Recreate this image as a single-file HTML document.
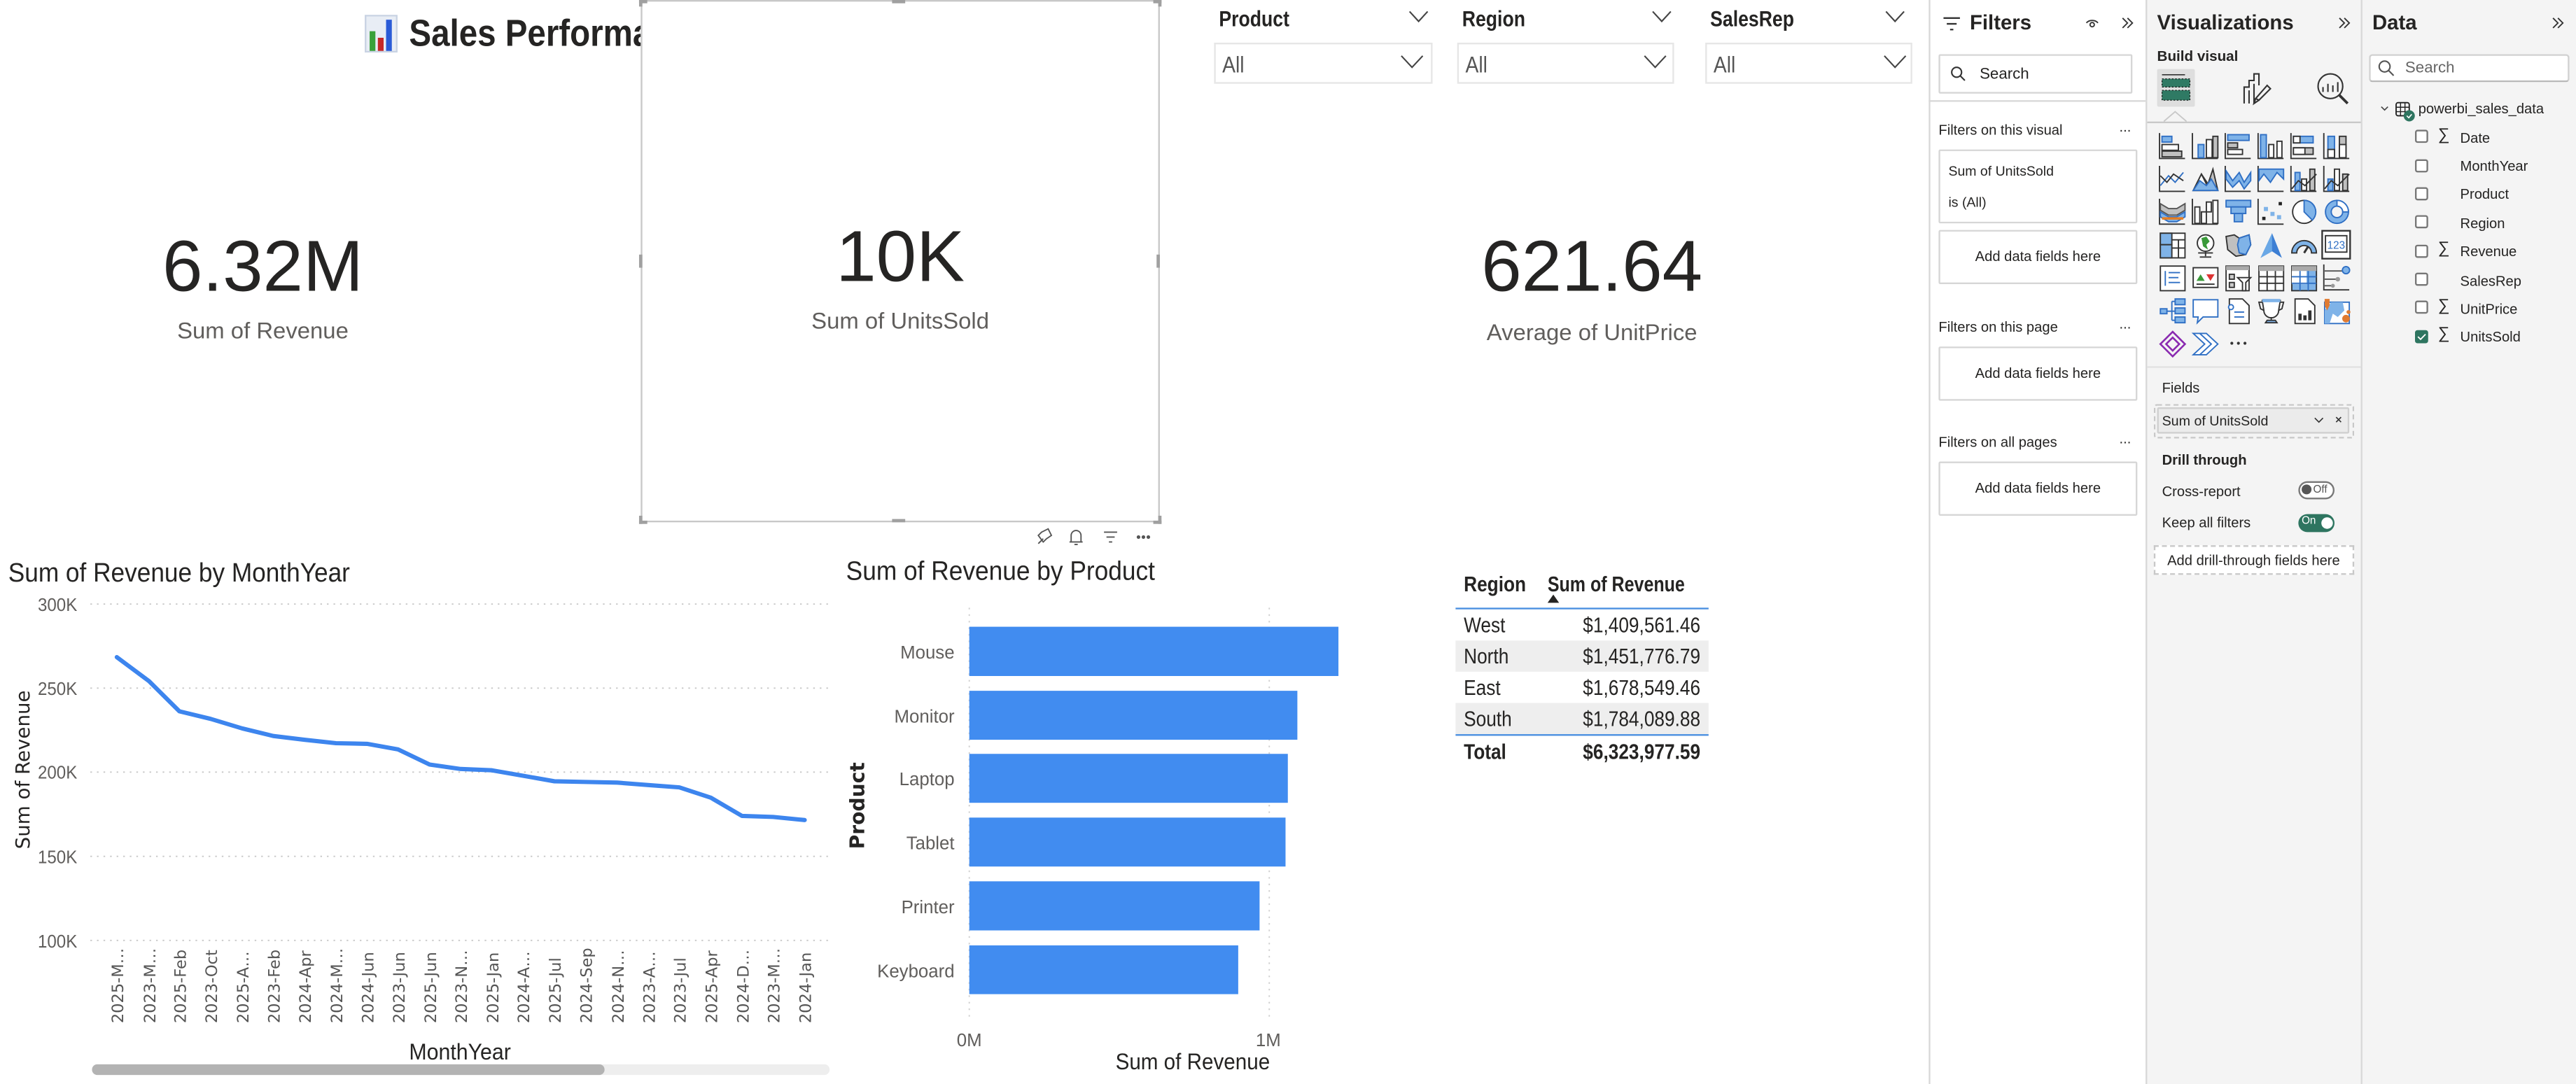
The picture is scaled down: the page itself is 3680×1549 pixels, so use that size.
<!DOCTYPE html>
<html><head><meta charset="utf-8">
<style>
*{margin:0;padding:0;box-sizing:border-box}
html,body{width:3680px;height:1548px;overflow:hidden;background:#fff}
#w{position:absolute;left:0;top:0;width:1568px;height:660px;transform:scale(2.34694);transform-origin:0 0;font-family:"Liberation Sans",sans-serif;color:#252423}
.a{position:absolute}
.big{font-size:44px;color:#252423;text-align:center;line-height:1}
.lbl{font-size:14px;color:#605e5c;text-align:center;line-height:1}
.sl{font-size:13.5px;font-weight:bold;color:#252423;transform:scaleX(.84);transform-origin:0 0;white-space:nowrap}
.box{border:1px solid #e6e6e6;background:#fff}
.pt{font-size:8.6px;color:#252423}
.fb{border:1px solid #d6d6d6;background:#fff;border-radius:1px}
.chk{position:absolute;width:8px;height:8px;border:1px solid #777;border-radius:1.5px;background:#fff}
.df{font-size:8.6px;color:#252423;position:absolute}
.sig{font-size:10px;position:absolute;color:#252423}
.cl{transform:scaleX(.86);transform-origin:0 0;white-space:nowrap}
.cr{transform:scaleX(.86);transform-origin:100% 0;white-space:nowrap}
</style></head><body><div id="w">

<svg class="a" style="left:222px;top:9px" width="20" height="23" viewBox="0 0 20 23"><rect x="0.5" y="0.5" width="19" height="22" fill="#e8edf5" stroke="#c9d3e3"/><rect x="3" y="10" width="3.5" height="12" fill="#3aa13a"/><rect x="8" y="14" width="3.5" height="8" fill="#c62828"/><rect x="13" y="3" width="3.5" height="19" fill="#2a5bd7"/></svg>
<div class="a" style="left:249px;top:7px;font-size:23px;font-weight:bold;white-space:nowrap;color:#252423;transform:scaleX(.88);transform-origin:0 0">Sales Performance Dashboard</div>

<div class="a big" style="left:60px;top:141px;width:200px">6.32M</div>
<div class="a lbl" style="left:60px;top:194px;width:200px">Sum of Revenue</div>

<div class="a" style="left:390px;top:0;width:316px;height:318px;background:#fff;border:1px solid #c8c8c8"></div>
<div class="a" style="left:389px;top:0;width:5px;height:4px;border-left:2px solid #a0a0a0;border-top:2px solid #a0a0a0"></div>
<div class="a" style="left:702px;top:0;width:5px;height:4px;border-right:2px solid #a0a0a0;border-top:2px solid #a0a0a0"></div>
<div class="a" style="left:389px;top:314px;width:5px;height:5px;border-left:2px solid #a0a0a0;border-bottom:2px solid #a0a0a0"></div>
<div class="a" style="left:702px;top:314px;width:5px;height:5px;border-right:2px solid #a0a0a0;border-bottom:2px solid #a0a0a0"></div>
<div class="a" style="left:543px;top:0;width:8px;height:2px;background:#a0a0a0"></div>
<div class="a" style="left:543px;top:316px;width:8px;height:2px;background:#a0a0a0"></div>
<div class="a" style="left:389px;top:155px;width:2px;height:8px;background:#a0a0a0"></div>
<div class="a" style="left:704px;top:155px;width:2px;height:8px;background:#a0a0a0"></div>
<div class="a big" style="left:448px;top:135px;width:200px">10K</div>
<div class="a lbl" style="left:448px;top:188px;width:200px">Sum of UnitsSold</div>
<svg class="a" style="left:628px;top:321px" width="76" height="12" viewBox="0 0 76 12" fill="none" stroke="#555" stroke-width="0.8">
<path d="M4 10 L7 7 M6 3 L10 1 L12 5 L9 7 L7 9 L4 5 Z"/>
<path d="M24 9 L24 5 A3 3 0 0 1 30 5 L30 9 Z M23 9 L31 9 M26 10.5 L28 10.5"/>
<path d="M44 3 L52 3 M45.5 6 L50.5 6 M47 9 L49 9"/>
<circle cx="65" cy="6" r="0.7" fill="#555"/><circle cx="68" cy="6" r="0.7" fill="#555"/><circle cx="71" cy="6" r="0.7" fill="#555"/>
</svg>

<div class="a sl" style="left:742px;top:4px">Product</div>
<div class="a sl" style="left:890px;top:4px">Region</div>
<div class="a sl" style="left:1041px;top:4px">SalesRep</div>
<svg class="a" style="left:0;top:0" width="1174" height="60" fill="none" stroke="#444" stroke-width="0.9">
<path d="M858 7 L863.5 13 L869 7"/><path d="M1006 7 L1011.5 13 L1017 7"/><path d="M1148 7 L1153.5 13 L1159 7"/>
</svg>
<div class="a box" style="left:739px;top:26px;width:133px;height:25px"></div>
<div class="a box" style="left:887px;top:26px;width:132px;height:25px"></div>
<div class="a box" style="left:1038px;top:26px;width:126px;height:25px"></div>
<div class="a cl" style="left:744px;top:31px;font-size:14px;color:#555">All</div>
<div class="a cl" style="left:892px;top:31px;font-size:14px;color:#555">All</div>
<div class="a cl" style="left:1043px;top:31px;font-size:14px;color:#555">All</div>
<svg class="a" style="left:0;top:0" width="1174" height="60" fill="none" stroke="#444" stroke-width="0.9">
<path d="M853 34 L859.5 41 L866 34"/><path d="M1001 34 L1007.5 41 L1014 34"/><path d="M1147 34 L1153.5 41 L1160 34"/>
</svg>

<div class="a big" style="left:869px;top:141px;width:200px">621.64</div>
<div class="a lbl" style="left:869px;top:195px;width:200px">Average of UnitPrice</div>

<svg class="a" style="left:0;top:0" width="1174" height="660" viewBox="0 0 1174 660">
<g font-family="Liberation Sans, sans-serif">
<text x="5" y="354" font-size="16" fill="#252423" textLength="208" lengthAdjust="spacingAndGlyphs">Sum of Revenue by MonthYear</text>
<g stroke="#c8c8c8" stroke-width="0.8" stroke-dasharray="1 3">
<line x1="55" y1="367.8" x2="505" y2="367.8"/><line x1="55" y1="419" x2="505" y2="419"/><line x1="55" y1="470.1" x2="505" y2="470.1"/><line x1="55" y1="521.4" x2="505" y2="521.4"/><line x1="55" y1="572.6" x2="505" y2="572.6"/>
</g>
<g font-size="11" fill="#605e5c" text-anchor="end">
<text x="47" y="372" textLength="24" lengthAdjust="spacingAndGlyphs">300K</text><text x="47" y="423" textLength="24" lengthAdjust="spacingAndGlyphs">250K</text><text x="47" y="474" textLength="24" lengthAdjust="spacingAndGlyphs">200K</text><text x="47" y="525.5" textLength="24" lengthAdjust="spacingAndGlyphs">150K</text><text x="47" y="577" textLength="24" lengthAdjust="spacingAndGlyphs">100K</text>
</g>
<polyline fill="none" stroke="#3d85ee" stroke-width="2.6" stroke-linejoin="round" stroke-linecap="round" points="71.1,400.1 90.7,414.7 109.2,433.1 128.2,437.7 147.4,443.5 166.3,448.1 185.2,450.4 204.5,452.5 223.4,452.9 242.3,456.3 261.5,465.5 280.4,468.2 299.4,469 318.3,472.3 337.5,475.7 356.4,476.1 375.7,476.5 394.6,478 413.5,479.4 432.7,485.7 451.7,496.8 470.6,497.4 489.8,499.3"/>
<text x="249" y="645" font-size="14" fill="#252423" textLength="62" lengthAdjust="spacingAndGlyphs">MonthYear</text>
<text x="515" y="353" font-size="16" fill="#252423" textLength="188" lengthAdjust="spacingAndGlyphs">Sum of Revenue by Product</text>
<g font-size="11" fill="#605e5c" text-anchor="end">
<text x="581" y="401">Mouse</text><text x="581" y="440">Monitor</text><text x="581" y="478">Laptop</text><text x="581" y="517">Tablet</text><text x="581" y="556">Printer</text><text x="581" y="595">Keyboard</text>
</g>
<g fill="#605e5c" font-size="11" text-anchor="middle"><text x="590" y="637">0M</text><text x="772" y="637">1M</text></g>
<text x="679" y="651" font-size="14" fill="#252423" textLength="94" lengthAdjust="spacingAndGlyphs">Sum of Revenue</text>
</g>
<g stroke="#d0d0d0" stroke-width="0.8" stroke-dasharray="1 3"><line x1="590" y1="370" x2="590" y2="620"/><line x1="772.6" y1="370" x2="772.6" y2="620"/></g>
<g fill="#418cf0">
<rect x="590" y="381.6" width="224.7" height="30"/><rect x="590" y="420.6" width="199.7" height="29.8"/><rect x="590" y="459" width="193.9" height="29.8"/><rect x="590" y="497.8" width="192.5" height="29.8"/><rect x="590" y="536.6" width="176.7" height="29.9"/><rect x="590" y="575.6" width="163.7" height="29.7"/>
</g>
<g font-family="DejaVu Sans, sans-serif" font-size="9.6" fill="#555">
<text transform="translate(75,623) rotate(-90)">2025-M…</text>
<text transform="translate(94.6,623) rotate(-90)">2023-M…</text>
<text transform="translate(113.1,623) rotate(-90)">2025-Feb</text>
<text transform="translate(132.1,623) rotate(-90)">2023-Oct</text>
<text transform="translate(151.3,623) rotate(-90)">2025-A…</text>
<text transform="translate(170.2,623) rotate(-90)">2023-Feb</text>
<text transform="translate(189.1,623) rotate(-90)">2024-Apr</text>
<text transform="translate(208.4,623) rotate(-90)">2024-M…</text>
<text transform="translate(227.3,623) rotate(-90)">2024-Jun</text>
<text transform="translate(246.2,623) rotate(-90)">2023-Jun</text>
<text transform="translate(265.4,623) rotate(-90)">2025-Jun</text>
<text transform="translate(284.3,623) rotate(-90)">2023-N…</text>
<text transform="translate(303.3,623) rotate(-90)">2025-Jan</text>
<text transform="translate(322.2,623) rotate(-90)">2024-A…</text>
<text transform="translate(341.4,623) rotate(-90)">2025-Jul</text>
<text transform="translate(360.3,623) rotate(-90)">2024-Sep</text>
<text transform="translate(379.6,623) rotate(-90)">2024-N…</text>
<text transform="translate(398.5,623) rotate(-90)">2023-A…</text>
<text transform="translate(417.4,623) rotate(-90)">2023-Jul</text>
<text transform="translate(436.6,623) rotate(-90)">2025-Apr</text>
<text transform="translate(455.6,623) rotate(-90)">2024-D…</text>
<text transform="translate(474.5,623) rotate(-90)">2023-M…</text>
<text transform="translate(493.7,623) rotate(-90)">2024-Jan</text>
</g>
<text transform="translate(18,517) rotate(-90)" font-family="DejaVu Sans, sans-serif" font-size="11.8" fill="#252423">Sum of Revenue</text>
<text transform="translate(526,517) rotate(-90)" font-family="DejaVu Sans, sans-serif" font-size="12" font-weight="bold" fill="#252423">Product</text>
<rect x="56" y="648" width="449" height="6.5" rx="3.2" fill="#eeeeee"/>
<rect x="56" y="648" width="312" height="6.5" rx="3.2" fill="#b3b3b3"/>
</svg>

<div class="a" style="left:886px;top:389.7px;width:154px;height:19.4px;background:#eeeeee"></div>
<div class="a" style="left:886px;top:428px;width:154px;height:19px;background:#eeeeee"></div>
<div class="a" style="left:886px;top:369.5px;width:154px;height:1.3px;background:#4a8fe0"></div>
<div class="a" style="left:886px;top:446.6px;width:154px;height:1.3px;background:#4a8fe0"></div>
<div class="a cl" style="left:891px;top:348px;font-size:13px;font-weight:bold">Region</div>
<div class="a cl" style="left:942px;top:348px;font-size:13px;font-weight:bold;transform:scaleX(.82)">Sum of Revenue</div>
<svg class="a" style="left:941px;top:361px" width="9" height="7"><path d="M1 6 L4.5 1 L8 6 Z" fill="#252423"/></svg>
<div class="a cl" style="left:891px;top:373px;font-size:13px">West</div>
<div class="a cl" style="left:891px;top:392px;font-size:13px">North</div>
<div class="a cl" style="left:891px;top:411px;font-size:13px">East</div>
<div class="a cl" style="left:891px;top:430px;font-size:13px">South</div>
<div class="a cl" style="left:891px;top:450px;font-size:13px;font-weight:bold">Total</div>
<div class="a cr" style="left:900px;top:373px;width:135px;text-align:right;font-size:13px">$1,409,561.46</div>
<div class="a cr" style="left:900px;top:392px;width:135px;text-align:right;font-size:13px">$1,451,776.79</div>
<div class="a cr" style="left:900px;top:411px;width:135px;text-align:right;font-size:13px">$1,678,549.46</div>
<div class="a cr" style="left:900px;top:430px;width:135px;text-align:right;font-size:13px">$1,784,089.88</div>
<div class="a cr" style="left:900px;top:450px;width:135px;text-align:right;font-size:13px;font-weight:bold">$6,323,977.59</div>

<div class="a" style="left:1174px;top:0;width:133px;height:660px;background:#fff;border-left:1px solid #d8d8d8;border-right:1px solid #d8d8d8"></div>
<svg class="a" style="left:1182px;top:9px" width="12" height="11" fill="none" stroke="#333" stroke-width="1"><path d="M1 2 L11 2 M3 5.5 L9 5.5 M5 9 L7 9"/></svg>
<div class="a" style="left:1199px;top:7px;font-size:12.5px;font-weight:bold">Filters</div>
<svg class="a" style="left:1268px;top:9px" width="36" height="10" fill="none" stroke="#333" stroke-width="0.8"><path d="M2 5 A4 3 0 0 1 9 5"/><circle cx="5.5" cy="6" r="1.3"/><path d="M24 2 L27 5 L24 8 M27 2 L30 5 L27 8"/></svg>
<div class="a fb" style="left:1180px;top:33px;width:118px;height:24px"></div>
<svg class="a" style="left:1187px;top:40px" width="10" height="10" fill="none" stroke="#333" stroke-width="0.9"><circle cx="4" cy="4" r="3"/><path d="M6.2 6.2 L9 9"/></svg>
<div class="a pt" style="left:1205px;top:40px;font-size:9.5px">Search</div>
<div class="a" style="left:1174px;top:60.5px;width:132px;height:1px;background:#d8d8d8"></div>
<div class="a pt" style="left:1180px;top:74px">Filters on this visual</div>
<div class="a pt" style="left:1290px;top:72px">...</div>
<div class="a fb" style="left:1180px;top:91px;width:121px;height:45px"></div>
<div class="a pt" style="left:1186px;top:99px;font-size:8.3px">Sum of UnitsSold</div>
<div class="a pt" style="left:1186px;top:118px;font-size:8.3px">is (All)</div>
<div class="a fb pt" style="left:1180px;top:140px;width:121px;height:33px;text-align:center;line-height:31px">Add data fields here</div>
<div class="a pt" style="left:1180px;top:194px">Filters on this page</div>
<div class="a pt" style="left:1290px;top:192px">...</div>
<div class="a fb pt" style="left:1180px;top:211px;width:121px;height:33px;text-align:center;line-height:31px">Add data fields here</div>
<div class="a pt" style="left:1180px;top:264px">Filters on all pages</div>
<div class="a pt" style="left:1290px;top:262px">...</div>
<div class="a fb pt" style="left:1180px;top:281px;width:121px;height:33px;text-align:center;line-height:31px">Add data fields here</div>

<div class="a" style="left:1307px;top:0;width:131px;height:660px;background:#f4f4f4;border-right:1px solid #d8d8d8"></div>
<div class="a" style="left:1313px;top:7px;font-size:12.5px;font-weight:bold">Visualizations</div>
<svg class="a" style="left:1422px;top:9px" width="10" height="10" fill="none" stroke="#333" stroke-width="0.8"><path d="M2 2 L5 5 L2 8 M5 2 L8 5 L5 8"/></svg>
<div class="a" style="left:1313px;top:29px;font-size:8.8px;font-weight:bold">Build visual</div>
<div class="a" style="left:1313px;top:41.5px;width:23px;height:23px;background:#dedede;border-radius:1px"></div>
<svg class="a" style="left:1313px;top:41.5px" width="23" height="23"><path d="M3 3.5 L17 3.5" stroke="#333" stroke-width="0.7"/><rect x="3" y="6" width="17" height="5" fill="#2f7a64" stroke="#111" stroke-width="0.5" stroke-dasharray="1 1"/><rect x="3" y="13" width="17" height="6" fill="#2f7a64" stroke="#111" stroke-width="0.5" stroke-dasharray="1 1"/></svg>
<svg class="a" style="left:1362px;top:43px" width="22" height="22" fill="none" stroke="#333" stroke-width="0.9"><path d="M4 20 L4 10 L7 10 L7 6 L10 6 L10 2 L13 2 L13 9 M10 8 L10 20 M7 12 L7 20"/><path d="M11 17 L18 9 L20 11 L13 18 Z M11 17 L10 20 L13 18"/></svg>
<svg class="a" style="left:1409px;top:43px" width="22" height="22" fill="none" stroke="#333" stroke-width="0.9"><circle cx="9.5" cy="9.5" r="7.5"/><path d="M5 13 L5 10 M8 13 L8 8 M11 13 L11 9 M14 13 L14 7"/><path d="M15 15 L20 20" stroke-width="1.6"/></svg>
<div class="a" style="left:1307px;top:73.5px;width:130px;height:1px;background:#c8c8c8"></div>
<svg class="a" style="left:1317px;top:67px" width="14" height="8"><path d="M0 7 L7 1 L14 7" fill="#f4f4f4" stroke="#c8c8c8" stroke-width="0.8"/></svg>

<svg class="a" style="left:1313px;top:80px" width="120" height="140" viewBox="0 0 120 140" stroke-width="0.8">
<defs>
<g id="ax"><path d="M0.5 0 L0.5 15.5 L16 15.5" fill="none" stroke="#333"/></g>
</defs>
<g transform="translate(1,1)"><use href="#ax"/><rect x="2" y="2" width="6" height="3.5" fill="#7fb3e8" stroke="#2f6fc4"/><rect x="2" y="7" width="10" height="3.5" fill="#fff" stroke="#333"/><rect x="2" y="11" width="12" height="3.5" fill="#c0c0c0" stroke="#333"/></g>
<g transform="translate(21,1)"><use href="#ax"/><rect x="4" y="7" width="3.5" height="8" fill="#7fb3e8" stroke="#2f6fc4"/><rect x="9" y="4" width="3.5" height="11" fill="#fff" stroke="#333"/><rect x="13" y="2" width="3" height="13" fill="#c0c0c0" stroke="#333"/></g>
<g transform="translate(41,1)"><use href="#ax"/><rect x="2" y="1" width="13" height="3.5" fill="#7fb3e8" stroke="#2f6fc4"/><rect x="2" y="6" width="6" height="3" fill="#c0c0c0" stroke="#333"/><rect x="2" y="10" width="9" height="3" fill="#fff" stroke="#333"/></g>
<g transform="translate(61,1)"><use href="#ax"/><rect x="2" y="1" width="3.5" height="14" fill="#7fb3e8" stroke="#2f6fc4"/><rect x="7" y="7" width="3" height="8" fill="#fff" stroke="#333"/><rect x="12" y="5" width="3" height="10" fill="#fff" stroke="#333"/></g>
<g transform="translate(81,1)"><use href="#ax"/><rect x="2" y="2" width="12" height="4" fill="#7fb3e8" stroke="#2f6fc4"/><rect x="2" y="2" width="4" height="4" fill="#fff" stroke="#333"/><rect x="2" y="9" width="12" height="4" fill="#c0c0c0" stroke="#333"/><rect x="2" y="9" width="7" height="4" fill="#fff" stroke="#333"/></g>
<g transform="translate(101,1)"><use href="#ax"/><rect x="3" y="2" width="4" height="13" fill="#7fb3e8" stroke="#2f6fc4"/><rect x="3" y="10" width="4" height="5" fill="#fff" stroke="#333"/><rect x="10" y="2" width="4" height="13" fill="#c0c0c0" stroke="#333"/><rect x="10" y="7" width="4" height="8" fill="#fff" stroke="#333"/></g>
<g transform="translate(1,21)"><use href="#ax"/><path d="M1 12 L6 6 L10 10 L15 4" fill="none" stroke="#2f6fc4"/><path d="M1 6 L5 10 L9 5 L15 9" fill="none" stroke="#333"/></g>
<g transform="translate(21,21)"><path d="M1 15 L6 5 L10 11 L13 2 L16 15 Z" fill="#c0c0c0" stroke="#333"/><path d="M1 15 L6 5 L11 15 Z" fill="#fff" stroke="#333"/><path d="M1 15 L5 9 L9 12 L12 8 L16 15 Z" fill="#7fb3e8" stroke="#2f6fc4"/></g>
<g transform="translate(41,21)"><use href="#ax"/><path d="M1 3 L5 9 L9 4 L12 10 L16 4 L16 9 L12 14 L9 9 L5 13 L1 8 Z" fill="#7fb3e8" stroke="#2f6fc4"/></g>
<g transform="translate(61,21)"><use href="#ax"/><path d="M1 2 L16 2 L16 8 L12 4 L8 10 L4 5 L1 9 Z" fill="#7fb3e8" stroke="#2f6fc4"/></g>
<g transform="translate(81,21)"><use href="#ax"/><rect x="3" y="4" width="3" height="11" fill="#7fb3e8" stroke="#2f6fc4"/><rect x="7" y="8" width="3" height="7" fill="#fff" stroke="#333"/><rect x="12" y="2" width="3" height="13" fill="#c0c0c0" stroke="#333"/><path d="M1 14 L5 9 L9 12 L16 5" fill="none" stroke="#333"/></g>
<g transform="translate(101,21)"><use href="#ax"/><rect x="3" y="8" width="3" height="7" fill="#7fb3e8" stroke="#2f6fc4"/><rect x="7" y="2" width="3" height="13" fill="#fff" stroke="#333"/><rect x="12" y="5" width="3" height="10" fill="#c0c0c0" stroke="#333"/><path d="M1 14 L5 9 L9 12 L16 5" fill="none" stroke="#333"/></g>
<g transform="translate(1,41)"><use href="#ax"/><path d="M1 3 L6 6 L11 6 L16 3 L16 7 L11 10 L6 10 L1 7 Z" fill="#c0c0c0" stroke="#555"/><path d="M1 8 L6 11 L11 11 L16 8 L16 11 L11 14 L6 14 L1 11 Z" fill="#7fb3e8" stroke="#2f6fc4"/><path d="M2 12 L15 12" stroke="#e67e22" stroke-width="1.5"/></g>
<g transform="translate(21,41)"><use href="#ax"/><rect x="2" y="5" width="3" height="10" fill="#fff" stroke="#333"/><rect x="6" y="8" width="3" height="7" fill="#fff" stroke="#333"/><rect x="9" y="2" width="3" height="6" fill="#fff" stroke="#333"/><rect x="13" y="1" width="3" height="14" fill="#fff" stroke="#333"/></g>
<g transform="translate(41,41)"><rect x="1" y="1" width="15" height="4" fill="#7fb3e8" stroke="#2f6fc4"/><rect x="4" y="5" width="9" height="4" fill="#7fb3e8" stroke="#2f6fc4"/><rect x="6" y="9" width="5" height="5" fill="#7fb3e8" stroke="#2f6fc4"/></g>
<g transform="translate(61,41)"><use href="#ax"/><rect x="4" y="5" width="2.5" height="2.5" fill="#7fb3e8"/><rect x="8" y="8" width="2.5" height="2.5" fill="#7fb3e8"/><rect x="12" y="10" width="2.5" height="2.5" fill="#7fb3e8"/><rect x="3" y="11" width="2" height="2" fill="#222"/><rect x="13" y="2" width="2" height="2" fill="#222"/></g>
<g transform="translate(81,41)"><circle cx="8.5" cy="8" r="7" fill="#fff" stroke="#333"/><path d="M8.5 8 L8.5 1 A7 7 0 0 1 13.5 13 Z" fill="#7fb3e8" stroke="#2f6fc4"/></g>
<g transform="translate(101,41)"><circle cx="8.5" cy="8" r="7" fill="#7fb3e8" stroke="#2f6fc4"/><circle cx="8.5" cy="8" r="3.5" fill="#f4f4f4" stroke="#2f6fc4"/><path d="M8.5 1 A7 7 0 0 1 15.5 8 L12 8 A3.5 3.5 0 0 0 8.5 4.5 Z" fill="#fff" stroke="#2f6fc4"/></g>
<g transform="translate(1,61)"><rect x="1" y="1" width="15" height="15" fill="#fff" stroke="#333"/><rect x="1" y="1" width="7" height="7" fill="#7fb3e8" stroke="#333"/><rect x="1" y="8" width="7" height="8" fill="#7fb3e8" stroke="#333"/><path d="M8 5 L16 5 M12 5 L12 16 M8 10 L16 10" stroke="#333" fill="none"/></g>
<g transform="translate(21,61)"><circle cx="8.5" cy="7" r="5" fill="#fff" stroke="#333"/><path d="M6 4 L9 3 L11 6 L9 8 L10 11 L7 9 Z" fill="#3a9a3a"/><path d="M4 13 L13 13 M8.5 12 L8.5 15 M5 15.5 L12 15.5" stroke="#333" fill="none"/></g>
<g transform="translate(41,61)"><path d="M1 3 L6 2 L9 4 L15 2 L16 8 L13 14 L7 15 L2 11 Z" fill="#c0c0c0" stroke="#333"/><path d="M9 4 L15 2 L16 8 L13 14 L9 13 L8 8 Z" fill="#7fb3e8" stroke="#2f6fc4"/></g>
<g transform="translate(61,61)"><path d="M9 1 L15 16 L9 12 L2 16 Z" fill="#3d7fd4"/><path d="M9 1 L9 12 L2 16 Z" fill="#6aa8e6"/></g>
<g transform="translate(81,61)"><path d="M1 13 A7.5 7.5 0 0 1 16 13 L13 13 A4.5 4.5 0 0 0 4 13 Z" fill="#7fb3e8" stroke="#333"/><path d="M8.5 13 L11 9" stroke="#333" stroke-width="1.3"/></g>
<g transform="translate(100,60)"><rect x="0.5" y="0.5" width="17" height="17" fill="#fff" stroke="#333" stroke-width="1"/><rect x="2.5" y="3.5" width="13" height="10" fill="none" stroke="#333"/><text x="9" y="11.5" font-size="6.5" text-anchor="middle" fill="#2f6fc4" font-family="Liberation Sans">123</text></g>
<g transform="translate(1,81)"><rect x="1" y="1" width="15" height="15" fill="#fff" stroke="#333"/><path d="M4 4 L4 13 M6 5 L13 5 M6 8 L12 8 M6 11 L13 11" stroke="#2f6fc4" fill="none"/></g>
<g transform="translate(21,81)"><rect x="1" y="2" width="15" height="12" fill="#fff" stroke="#333"/><path d="M3 10 L5.5 6 L8 10 Z" fill="#3a9a3a"/><path d="M9 6 L14 6 L11.5 10 Z" fill="#d33"/><path d="M3 12 L14 12" stroke="#333"/></g>
<g transform="translate(41,81)"><rect x="1" y="1" width="14" height="15" fill="#fff" stroke="#333"/><rect x="1" y="1" width="14" height="2.5" fill="#aaa"/><rect x="3" y="6" width="3" height="3" fill="#ccc" stroke="#333"/><rect x="3" y="11" width="3" height="3" fill="#ccc" stroke="#333"/><path d="M8 8 L16 8 L13 11 L13 16 L11 16 L11 11 Z" fill="#fff" stroke="#333"/></g>
<g transform="translate(61,81)"><rect x="1" y="1" width="15" height="15" fill="#fff" stroke="#333"/><rect x="1" y="1" width="15" height="3" fill="#aaa"/><path d="M1 7.5 L16 7.5 M1 11.5 L16 11.5 M6 4 L6 16 M11 4 L11 16" stroke="#333" fill="none"/></g>
<g transform="translate(81,81)"><rect x="1" y="1" width="15" height="15" fill="#7fb3e8" stroke="#333"/><rect x="1" y="1" width="15" height="3" fill="#aaa"/><rect x="1" y="4" width="9" height="8" fill="#fff"/><path d="M1 7.5 L16 7.5 M1 11.5 L16 11.5 M6 4 L6 16 M11 4 L11 16" stroke="#2f6fc4" fill="none"/></g>
<g transform="translate(101,81)"><use href="#ax"/><path d="M1 4 L13 4 M1 9 L8 9 M1 13 L5 13" stroke="#555" fill="none"/><circle cx="14" cy="3.5" r="2.2" fill="#7fb3e8" stroke="#2f6fc4"/><circle cx="9" cy="9" r="1.4" fill="#999"/><circle cx="6" cy="13" r="1.2" fill="#999"/></g>
<g transform="translate(1,101)"><rect x="1" y="7" width="4" height="3" fill="#7fb3e8" stroke="#2f6fc4"/><rect x="10" y="1" width="6" height="3.5" fill="#7fb3e8" stroke="#2f6fc4"/><rect x="10" y="6.5" width="6" height="3.5" fill="#7fb3e8" stroke="#2f6fc4"/><rect x="10" y="12" width="6" height="3.5" fill="#7fb3e8" stroke="#2f6fc4"/><path d="M5 8.5 L8 8.5 M8 2.5 L8 14 M8 2.5 L10 2.5 M8 8.5 L10 8.5 M8 14 L10 14" stroke="#2f6fc4" fill="none"/></g>
<g transform="translate(21,101)"><path d="M1 1.5 L16 1.5 L16 12 L7 12 L3.5 15.5 L4 12 L1 12 Z" fill="#fff" stroke="#2f6fc4"/></g>
<g transform="translate(41,101)"><path d="M3 1 L11 1 L15 5 L15 16 L3 16 Z" fill="#fff" stroke="#333"/><circle cx="4" cy="6" r="1.5" fill="#fff" stroke="#2f6fc4"/><path d="M6 9 L12 9 M6 12 L12 12" stroke="#2f6fc4"/></g>
<g transform="translate(61,101)"><path d="M3 2 L14 2 L13 8 A4.5 4.5 0 0 1 4 8 Z" fill="#fff" stroke="#333"/><path d="M3 3 L1 3 L2 7 L4 8 M14 3 L16 3 L15 7 L13 8" fill="none" stroke="#333"/><rect x="3" y="1" width="11" height="2" fill="#7fb3e8"/><path d="M8.5 12 L8.5 14 M5 15.5 L12 15.5 L11 14 L6 14 Z" fill="#7fb3e8" stroke="#333"/></g>
<g transform="translate(81,101)"><path d="M3 1 L11 1 L15 5 L15 16 L3 16 Z" fill="#fff" stroke="#333"/><rect x="5" y="10" width="2" height="4" fill="#333"/><rect x="8" y="11" width="2" height="3" fill="#333"/><rect x="11" y="8" width="2" height="6" fill="#333"/></g>
<g transform="translate(101,101)"><path d="M1 3 L16 3 L16 16 L1 16 Z" fill="#fff" stroke="#2f6fc4"/><path d="M5 3 L12 3 L13 8 L9 12 L6 10 L4 16 L1 16 L1 8 Z" fill="#7fb3e8"/><path d="M4 1 L4 5 L2.5 8 L1 5 L1 1 Z" fill="#e07a30"/><circle cx="14" cy="13" r="2.3" fill="#e07a30"/><circle cx="15.5" cy="9" r="1.2" fill="#e07a30"/></g>
<g transform="translate(1,121)"><path d="M8.5 1 L16 8.5 L8.5 16 L1 8.5 Z" fill="none" stroke="#8a2ab0" stroke-width="1.1"/><path d="M8.5 4.5 L12.5 8.5 L8.5 12.5 L4.5 8.5 Z" fill="none" stroke="#8a2ab0" stroke-width="1.1"/></g>
<g transform="translate(21,121)"><path d="M1 2 L9 2 L16 8.5 L9 15 L1 15 L8 8.5 Z" fill="#fff" stroke="#2f6fc4"/><path d="M5 2 L12 8.5 L5 15" fill="none" stroke="#2f6fc4"/></g>
<g transform="translate(41,121)" fill="#333"><circle cx="4.5" cy="8" r="0.9"/><circle cx="8.5" cy="8" r="0.9"/><circle cx="12.5" cy="8" r="0.9"/></g>
</svg>

<div class="a" style="left:1307px;top:222.5px;width:130px;height:1px;background:#e2e2e2"></div>
<div class="a pt" style="left:1316px;top:231px">Fields</div>
<div class="a" style="left:1311px;top:245.5px;width:121.5px;height:21px;border:1px dashed #c8c8c8;border-radius:2px"></div>
<div class="a" style="left:1313px;top:248px;width:117px;height:16px;background:#ebebeb;border:1px solid #d0d0d0;border-radius:1px"></div>
<div class="a pt" style="left:1316px;top:251px;font-size:8.4px">Sum of UnitsSold</div>
<svg class="a" style="left:1407px;top:251px" width="22" height="10" fill="none" stroke="#333" stroke-width="0.7"><path d="M2 3.5 L4.5 6 L7 3.5 M15 3 L18 6 M18 3 L15 6"/></svg>
<div class="a pt" style="left:1316px;top:275px;font-weight:bold">Drill through</div>
<div class="a pt" style="left:1316px;top:293.5px">Cross-report</div>
<div class="a" style="left:1398.5px;top:292.5px;width:22.5px;height:11px;border:1px solid #777;border-radius:6px;background:#fff"></div>
<div class="a" style="left:1401px;top:295px;width:6px;height:6px;border-radius:3px;background:#555"></div>
<div class="a" style="left:1408px;top:294.5px;font-size:6.5px;line-height:8px;color:#555">Off</div>
<div class="a pt" style="left:1316px;top:313px">Keep all filters</div>
<div class="a" style="left:1398.5px;top:312.5px;width:22.5px;height:11px;border-radius:6px;background:#2e7560"></div>
<div class="a" style="left:1401px;top:314px;font-size:6.5px;line-height:8px;color:#fff">On</div>
<div class="a" style="left:1412.5px;top:314.5px;width:7px;height:7px;border-radius:4px;background:#fff"></div>
<div class="a pt" style="left:1311px;top:332px;width:121.5px;height:18px;border:1px dashed #c8c8c8;background:#fff;text-align:center;line-height:16px">Add drill-through fields here</div>

<div class="a" style="left:1438px;top:0;width:130px;height:660px;background:#f4f4f4"></div>
<div class="a" style="left:1444px;top:7px;font-size:12.5px;font-weight:bold">Data</div>
<svg class="a" style="left:1552px;top:9px" width="10" height="10" fill="none" stroke="#333" stroke-width="0.8"><path d="M2 2 L5 5 L2 8 M5 2 L8 5 L5 8"/></svg>
<div class="a" style="left:1441.5px;top:33px;width:122.5px;height:17px;background:#fff;border:1px solid #d0d0d0;border-bottom:1.5px solid #b8b8b8;border-radius:2px"></div>
<svg class="a" style="left:1447px;top:36px" width="11" height="11" fill="none" stroke="#555" stroke-width="0.9"><circle cx="4.5" cy="4.5" r="3.3"/><path d="M7 7 L10 10"/></svg>
<div class="a" style="left:1464px;top:36px;font-size:9.5px;color:#666">Search</div>
<svg class="a" style="left:1448px;top:61px" width="24" height="14"><path d="M1.5 4 L3.5 6 L5.5 4" fill="none" stroke="#444" stroke-width="0.7"/><rect x="10.5" y="1.5" width="8" height="8" rx="1.2" fill="none" stroke="#222" stroke-width="0.8"/><path d="M10.5 4.3 L18.5 4.3 M10.5 7 L18.5 7 M13.2 1.5 L13.2 9.5 M15.9 1.5 L15.9 9.5" stroke="#222" stroke-width="0.6"/><circle cx="18.5" cy="9.5" r="3.4" fill="#2e7560"/><path d="M17 9.5 L18.2 10.7 L20 8.6" fill="none" stroke="#fff" stroke-width="0.7"/></svg>
<div class="df" style="left:1472px;top:61px">powerbi_sales_data</div>
<div class="chk" style="left:1470px;top:79px"></div><div class="sig" style="left:1484px;top:76.5px">∑</div><div class="df" style="left:1497.5px;top:78.5px">Date</div>
<div class="chk" style="left:1470px;top:96.5px"></div><div class="df" style="left:1497.5px;top:96px">MonthYear</div>
<div class="chk" style="left:1470px;top:114px"></div><div class="df" style="left:1497.5px;top:113px">Product</div>
<div class="chk" style="left:1470px;top:131px"></div><div class="df" style="left:1497.5px;top:130.5px">Region</div>
<div class="chk" style="left:1470px;top:148.5px"></div><div class="sig" style="left:1484px;top:146px">∑</div><div class="df" style="left:1497.5px;top:148px">Revenue</div>
<div class="chk" style="left:1470px;top:166px"></div><div class="df" style="left:1497.5px;top:165.5px">SalesRep</div>
<div class="chk" style="left:1470px;top:183px"></div><div class="sig" style="left:1484px;top:180.5px">∑</div><div class="df" style="left:1497.5px;top:182.5px">UnitPrice</div>
<div class="chk" style="left:1470px;top:200.5px;background:#2e7560;border-color:#2e7560"></div>
<svg class="a" style="left:1470px;top:200.5px" width="8" height="8"><path d="M1.8 4 L3.4 5.6 L6.4 2.5" fill="none" stroke="#fff" stroke-width="0.8"/></svg>
<div class="sig" style="left:1484px;top:198px">∑</div><div class="df" style="left:1497.5px;top:200px">UnitsSold</div>

</div></body></html>
